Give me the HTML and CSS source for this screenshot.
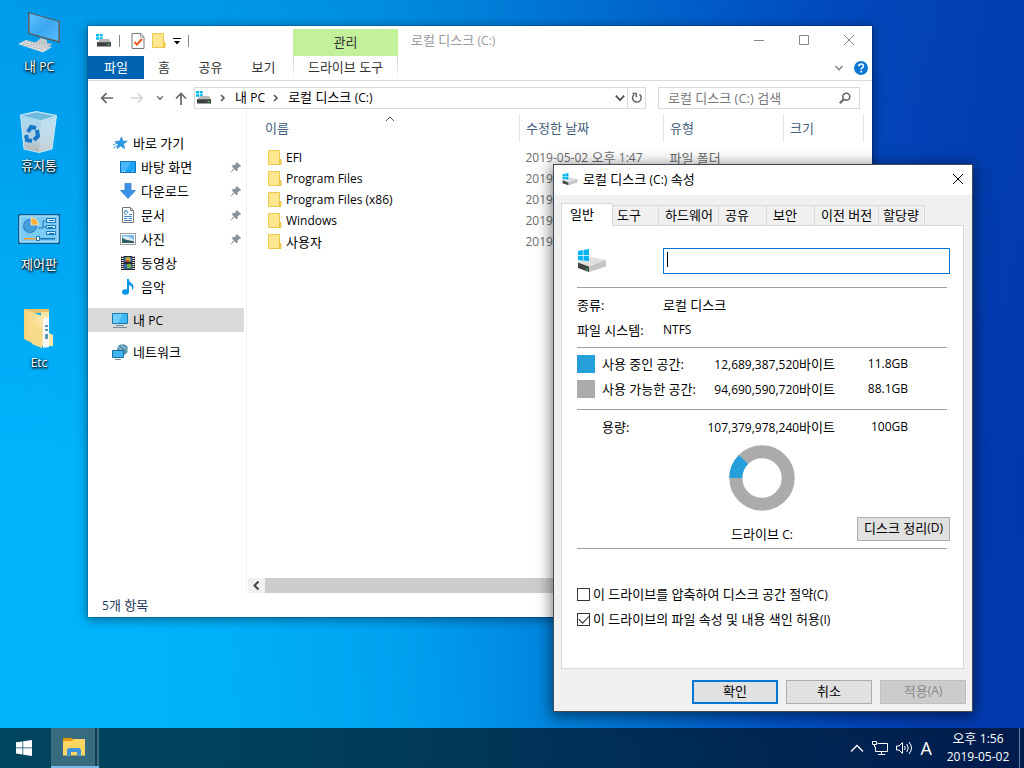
FILE: index.html
```html
<!DOCTYPE html>
<html lang="ko">
<head>
<meta charset="utf-8">
<meta name="viewport" content="width=device-width, initial-scale=1">
<title>로컬 디스크 (C:) 속성</title>
<link rel="stylesheet" href="styles.css">
</head>
<body>
<svg class="defs" aria-hidden="true">
  <defs>
    <linearGradient id="g-screen" x1="0" y1="0" x2="1" y2="1"><stop offset="0" stop-color="#5cc3fb"/><stop offset=".5" stop-color="#3ba7f2"/><stop offset="1" stop-color="#57baf8"/></linearGradient>
    <linearGradient id="g-folder" x1="0" y1="0" x2="1" y2="0"><stop offset="0" stop-color="#f3d37b"/><stop offset="1" stop-color="#fbe8a8"/></linearGradient>
    <linearGradient id="g-bin" x1="0" y1="0" x2="0" y2="1"><stop offset="0" stop-color="#a5dbf5"/><stop offset=".7" stop-color="#b5cfdd"/><stop offset="1" stop-color="#b8b4b4"/></linearGradient>
    <symbol id="drive" viewBox="0 0 16 14">
      <path fill="#00bcf2" d="M0 0h3v2.5H0zM3.7 0h3v2.5h-3zM0 3.2h3v2.5H0zM3.7 3.2h3v2.5h-3z"/>
      <path fill="#b9b9b9" d="M4 5h9l2 3H2z"/><path fill="#3e4143" d="M1 8h14v4.5H1z"/><path fill="#5c6063" d="M1 8h14v1H1z"/>
      <path fill="#4be04b" d="M11.5 10h2v1.2h-2z"/>
    </symbol>
    <symbol id="drive-large" viewBox="0 0 30 24">
      <path fill="#e1e1e1" d="m1 13 13-5 15 3v1L11 17z"/>
      <path fill="#c5c5c5" d="m12 17.300 17-6.300v6.500L12 23z"/>
      <path fill="#414345" d="m1 13.500 11 4V23L1 19z"/><path fill="#28c13d" d="m9 19.300 2 .7v1.500l-2-.7z"/>
      <path fill="#00b4f1" d="M1 2.100 5.800 1v5H1zM6.500.900 12 0v6H6.500zM1 6.700h4.800v4.900L1 11.200zM6.500 6.700H12v5.500l-5.500-.7z"/>
    </symbol>
    <symbol id="folder" viewBox="0 0 14 17"><path fill="#ffe690" stroke="#ecc94c" d="M.5 1.500h11v14H.5z"/><path fill="#fbd968" stroke="#e8c23e" d="M11.500 10.500h1.500v5h-1.500z"/></symbol>
    <symbol id="chevron-down" viewBox="0 0 10 10"><path d="m1.500 3 3.500 3.800L8.500 3" fill="none" stroke="currentColor" stroke-width="1.500"/></symbol>
    <symbol id="chevron-right" viewBox="0 0 10 10"><path d="m3 2 3 3-3 3" fill="none" stroke="currentColor" stroke-width="1.600"/></symbol>
    <symbol id="pin" viewBox="0 0 12 12"><path fill="#89929a" d="m7 1 4.200 4.200-1 .6-.7-.1-2 2 .1 1.900-.9.8L4.500 8.300 1 11.500.6 11l3.200-3.600L1.500 5l.9-.8 1.900.1 2-2L6.300 1.500z"/></symbol>
    <symbol id="close" viewBox="0 0 12 12"><path d="m1 1 10 10M11 1 1 11" fill="none" stroke="currentColor"/></symbol>
  </defs>
</svg>

<main class="desktop">
  <nav class="shortcuts" aria-label="바탕 화면">
    <a class="shortcut" href="#">
      <svg width="44" height="42" viewBox="0 0 44 42"><path fill="#565d62" d="m11 0 32 9v22l-32-9z"/><path fill="url(#g-screen)" d="m12.500 1.500 29 8.200V29l-29-8z"/><path fill="#bfc5c9" d="m24 26 6 2v3l6 1-5 2.500-14-3 4-3z"/><path fill="#d9dcde" d="m1 32 8-4 26 7-9 5.500z"/><path fill="none" stroke="#9aa0a5" stroke-width=".7" stroke-dasharray="2 1" d="m5 32 23 6M7 30.500l24 6M10 29.200l22 6"/></svg>
      <span>내 <span class="latin">PC</span></span>
    </a>
    <a class="shortcut" href="#">
      <svg width="40" height="42" viewBox="0 0 40 42"><path fill="url(#g-bin)" stroke="#c9eafa" d="m1.500 4 16-3.500 20 4L33 38l-13 3.500L5 38z"/><path fill="#6fb9df" d="m3 4.500 15-3 17.500 3.500L22 9z"/><path fill="#d5e7f0" opacity=".45" d="m22 9 15-4-4.500 33L20 41z"/><g fill="none" stroke="#1677c9" stroke-width="4"><path d="m9 21 3-5 5 1"/><path d="m7 24 1 5 5 1"/><path d="m18 19 1 6-4 4"/></g></svg>
      <span>휴지통</span>
    </a>
    <a class="shortcut" href="#">
      <svg width="42" height="42" viewBox="0 2 42 42"><path fill="#7bcbf5" stroke="#145c90" stroke-width="1.500" d="M.8 6.800h40.400v28.400H.8z"/><path fill="none" stroke="#b9e7fc" d="M2 8h38v26H2z"/><circle cx="12" cy="18" r="7" fill="#2181cc"/><circle cx="12" cy="18" r="6" fill="#479fda"/><path fill="#ffb13a" stroke="#fff" stroke-width=".6" d="M13 17v-7.500a7.500 7.500 0 0 1 7.500 7.500z"/><path fill="none" stroke="#1575b9" d="M20 20h5v-7h3M25 19h3"/><path fill="#c9ecff" stroke="#1575b9" d="M28.500 10.500h9v4h-9zM28.500 17.500h9v3h-9zM28.500 23.500h9v3h-9z"/><path fill="#1575b9" d="M31 12h5v1h-5zM30 19h5v1h-5zM31 25h5v1h-5z"/><path fill="#f49b28" d="M6 30h12v1.500H6z"/><path fill="#1575b9" d="M20 30h17v1.500H20z"/><path fill="#fff" stroke="#1575b9" d="M18.500 28.500h3v4h-3z"/></svg>
      <span>제어판</span>
    </a>
    <a class="shortcut" href="#">
      <svg width="32" height="42" viewBox="0 1 32 42"><path fill="#e7c266" d="M1 1h25v4H1z"/><path fill="#fbe7a6" d="M26 4v21l4 2v11H18V4z"/><path fill="#f7f8fa" d="m20 10 6-1v30l-6 1z"/><path fill="#5c99b8" d="M22 17h3v2h-3zM22 21h3v2h-3zM22 26h3v5h-3z"/><path fill="url(#g-folder)" d="m1 1 18 7v32L1 31z"/><path fill="#f8dc8c" d="m10 15 9 5v20l-10-4z"/></svg>
      <span class="latin">Etc</span>
    </a>
  </nav>

  <section class="window explorer" aria-label="로컬 디스크 (C:)">
    <header class="titlebar">
      <div class="quick">
        <svg width="16" height="14"><use href="#drive"/></svg><i class="sep"></i>
        <svg width="14" height="16" viewBox="0 0 14 16"><path fill="#fff" stroke="#777" d="M1 .5h9L13 4v11.500H1z"/><path fill="none" stroke="#999" d="M9.500.5V4H13"/><path fill="none" stroke="#e8591c" stroke-width="2" d="m3.500 9 2.500 2.500L11 6"/></svg>
        <svg width="14" height="17"><use href="#folder"/></svg>
        <svg width="8" height="8" viewBox="0 0 8 8"><path d="M0 1h8v1H0zM1 4h6L4 7.500z"/></svg><i class="sep"></i>
      </div>
      <div class="context">관리</div>
      <h1 class="caption">로컬 디스크 <span class="latin">(C:)</span></h1>
      <div class="controls">
        <button aria-label="최소화"><svg width="12" height="12"><path d="M1 6.500h10" stroke="currentColor"/></svg></button>
        <button aria-label="최대화"><svg width="12" height="12"><path d="M1.500 1.500h9v9h-9z" fill="none" stroke="currentColor"/></svg></button>
        <button aria-label="닫기"><svg width="12" height="12"><use href="#close"/></svg></button>
      </div>
    </header>
    <nav class="ribbon">
      <button class="file">파일</button><button class="home">홈</button><button>공유</button><button>보기</button><button class="tools">드라이브 도구</button>
      <span class="ribbon-end"><svg width="10" height="10"><use href="#chevron-down"/></svg>
      <svg width="14" height="14"><circle cx="7" cy="7" r="7" fill="#0d78d3"/><path d="M4.800 5.300c0-3 4.600-3 4.600-.3 0 1.600-2.200 1.500-2.200 3.400M7.200 9.800v1.800" fill="none" stroke="#fff" stroke-width="1.600"/></svg></span>
    </nav>
    <div class="address">
      <button class="nav" aria-label="뒤로"><svg width="14" height="12"><path d="M13 6H2M6.500 1.200 1.700 6l4.800 4.800" fill="none" stroke="#666" stroke-width="1.700"/></svg></button>
      <button class="nav" aria-label="앞으로"><svg width="14" height="12"><path d="M1 6h11M7.500 1.200 12.300 6l-4.800 4.800" fill="none" stroke="#d4d4d4" stroke-width="1.500"/></svg></button>
      <button class="recent" aria-label="최근 위치"><svg width="8" height="8"><use href="#chevron-down"/></svg></button>
      <button class="up" aria-label="위로"><svg width="12" height="13"><path d="M6 13V2M1 6.500l5-5 5 5" fill="none" stroke="#666" stroke-width="1.700"/></svg></button>
      <div class="path">
        <svg width="16" height="14"><use href="#drive"/></svg>
        <svg class="crumb" width="10" height="10"><use href="#chevron-right"/></svg><span>내 <span class="latin">PC</span></span>
        <svg class="crumb" width="10" height="10"><use href="#chevron-right"/></svg><span>로컬 디스크 <span class="latin">(C:)</span></span>
        <button class="drop" aria-label="이전 위치"><svg width="12" height="12"><use href="#chevron-down"/></svg></button>
        <button class="refresh" aria-label="새로 고침"><svg width="12" height="12" viewBox="0 0 12 12"><path d="M3 2.600a4.300 4.300 0 1 0 5.500-.2" fill="none" stroke="#666" stroke-width="1.500"/><path fill="#666" d="M1.500.8H6v4.500H4.600V2.200H1.500z"/></svg></button>
      </div>
      <label class="search"><input type="text" placeholder="로컬 디스크 (C:) 검색" aria-label="검색"><svg width="12" height="12"><circle cx="7.300" cy="4.700" r="3.500" fill="none" stroke="#666" stroke-width="1.600"/><path d="M4.800 7.200.8 11.200" stroke="#666" stroke-width="2"/></svg></label>
    </div>
    <div class="body">
      <nav class="tree">
        <a class="root" href="#"><svg width="16" height="16"><path fill="#2c9be8" stroke="#1b7dca" stroke-width=".7" d="m9.500 2 1.200 4.300h4.500l-3.800 2.500 1.300 4.700-4-2.600L5 13.500l1.200-4.300L3 6.500l4.500-.2z"/><path d="m1 10 4-2M1.500 13 5 10.500" stroke="#3ba0e5"/></svg>바로 가기</a>
        <a href="#"><svg width="16" height="16"><path fill="#1ba2f4" stroke="#0d72b8" d="M.5 2.500h15v11H.5z"/><path fill="#45b7fa" d="M1 3h10L6 12H1z"/><path stroke="#fff" stroke-dasharray="1 1" d="M2 12.500h3M12 12.500h2"/></svg>바탕 화면<svg class="pin" width="12" height="12"><use href="#pin"/></svg></a>
        <a href="#"><svg width="16" height="16"><path fill="#3b91e5" stroke="#2576c8" stroke-width=".7" d="M5 .5h6v7h4.500L8 15.500.5 7.500H5z"/></svg>다운로드<svg class="pin" width="12" height="12"><use href="#pin"/></svg></a>
        <a href="#"><svg width="16" height="16"><path fill="#fff" stroke="#777" d="M2.500.5h8l3 3v12h-11z"/><path fill="none" stroke="#777" d="M10.500.5v3h3"/><path stroke="#3c8ac5" d="M4 7h3M9 7.500h3M4 9.500h8M4 11.500h3M9 11.500h3M4 13.500h8"/><path fill="none" stroke="#1e79b9" d="m4 6 2-3 2 3"/></svg>문서<svg class="pin" width="12" height="12"><use href="#pin"/></svg></a>
        <a href="#"><svg width="16" height="16"><path fill="#fff" stroke="#999" d="M.5 2.500h15v11H.5z"/><path fill="#79bdec" d="M2 4h12v5H2z"/><path fill="#dcefff" d="m4 5 5 1 5 3H2z"/><path fill="#315b63" d="m2 7 5 2 7 1v2H2z"/></svg>사진<svg class="pin" width="12" height="12"><use href="#pin"/></svg></a>
        <a href="#"><svg width="16" height="16"><path fill="#292929" d="M1 1h14v14H1z"/><path stroke="#fff" stroke-width="2" stroke-dasharray="1 1" d="M2.500 1v14M13.500 1v14"/><path fill="#3367aa" d="M4 2h8v5H4zM4 9h8v5H4z"/><circle cx="8" cy="4.500" r="2.500" fill="#cbb22f"/><circle cx="9" cy="11" r="2.300" fill="#7bae39"/><path fill="#d44536" d="M6 5h3v2H6z"/></svg>동영상</a>
        <a href="#"><svg width="16" height="16"><ellipse cx="5.500" cy="13" rx="3.500" ry="2.800" fill="#0795e9"/><path fill="#0795e9" d="M7 0h1.800c0 4 4.800 4 4.800 8 0 1.300-.6 2.500-1.600 3.500 1-4-1.500-5-3-5.200V13H7z"/></svg>음악</a>
        <a class="root place selected" href="#"><svg width="16" height="16"><path fill="#42b7f2" stroke="#197bad" d="M.5 1.500h15v10H.5z"/><path fill="#6fcefa" d="M1 2h10L6 11H1z"/><path fill="#778a96" d="M4 13h8v1H4zM1 15h14v1H1z"/></svg><span>내 <span class="latin">PC</span></span></a>
        <a class="root place" href="#"><svg width="16" height="16"><circle cx="10.500" cy="5.500" r="5.500" fill="#5794ab"/><path d="M5.500 4c3-1 4 2 5 4m0-8c-4 3 6 4 5 7" stroke="#c0e0ea" fill="none"/><path fill="#41b4f2" stroke="#196d9f" d="M.5 6.500h11v7H.5z"/><path fill="#7b8c96" d="M3 15h6v1H3z"/></svg>네트워크</a>
      </nav>
      <div class="files">
        <table>
          <colgroup><col><col class="col-date"><col class="col-type"><col class="col-size"></colgroup>
          <thead><tr><th class="name">이름<svg class="sort" width="10" height="10"><path d="m1 7 4-4 4 4" fill="none" stroke="#555"/></svg></th><th>수정한 날짜</th><th>유형</th><th>크기</th></tr></thead>
          <tbody>
            <tr><td class="entry latin"><svg width="14" height="17"><use href="#folder"/></svg>EFI</td><td><span class="latin">2019-05-02</span> 오후 <span class="latin">1:47</span></td><td>파일 폴더</td><td></td></tr>
            <tr><td class="entry latin"><svg width="14" height="17"><use href="#folder"/></svg>Program Files</td><td class="latin">2019</td><td></td><td></td></tr>
            <tr><td class="entry latin"><svg width="14" height="17"><use href="#folder"/></svg>Program Files (x86)</td><td class="latin">2019</td><td></td><td></td></tr>
            <tr><td class="entry latin"><svg width="14" height="17"><use href="#folder"/></svg>Windows</td><td class="latin">2019</td><td></td><td></td></tr>
            <tr><td class="entry"><svg width="14" height="17"><use href="#folder"/></svg>사용자</td><td class="latin">2019</td><td></td><td></td></tr>
          </tbody>
        </table>
        <div class="scrollbar"><svg width="17" height="15"><path d="M10.500 3.500 6.500 7.500l4 4" fill="none" stroke="#444" stroke-width="2"/></svg><span class="thumb"></span></div>
      </div>
    </div>
    <footer class="status"><span class="latin">5</span>개 항목</footer>
  </section>

  <section class="window dialog" role="dialog" aria-label="로컬 디스크 (C:) 속성">
    <header class="dialog-title"><svg width="16" height="13"><use href="#drive-large"/></svg><h2>로컬 디스크 <span class="latin">(C:)</span> 속성</h2><button aria-label="닫기"><svg width="12" height="12"><use href="#close"/></svg></button></header>
    <div class="tabs" role="tablist">
      <button class="tab active" role="tab" aria-selected="true">일반</button><button class="tab short" role="tab">도구</button><button class="tab wide" role="tab">하드웨어</button><button class="tab" role="tab">공유</button><button class="tab" role="tab">보안</button><button class="tab widest" role="tab">이전 버전</button><button class="tab short" role="tab">할당량</button>
    </div>
    <div class="panel">
      <div class="volume"><svg width="30" height="26"><use href="#drive-large"/></svg><div class="volume-field"><input type="text" aria-label="볼륨 이름"><i class="caret"></i></div></div>
      <hr>
      <dl class="facts"><dt>종류:</dt><dd>로컬 디스크</dd><dt>파일 시스템:</dt><dd class="latin">NTFS</dd></dl>
      <hr>
      <div class="usage">
        <div class="usage-row"><i class="swatch used"></i><span>사용 중인 공간:</span><span class="amount"><span class="latin">12,689,387,520</span>바이트</span><span class="amount latin">11.8GB</span></div>
        <div class="usage-row"><i class="swatch free"></i><span>사용 가능한 공간:</span><span class="amount"><span class="latin">94,690,590,720</span>바이트</span><span class="amount latin">88.1GB</span></div>
      </div>
      <hr>
      <div class="total usage-row"><i></i><span>용량:</span><span class="amount"><span class="latin">107,379,978,240</span>바이트</span><span class="amount latin">100GB</span></div>
      <div class="chart">
        <figure><svg width="66" height="66" viewBox="0 0 66 66"><circle cx="33" cy="33" r="26.200" fill="none" stroke="#ababab" stroke-width="13"/><path d="M6.800 33A26.200 26.200 0 0 1 14.500 14.500" fill="none" stroke="#26a0da" stroke-width="13"/></svg><figcaption>드라이브 <span class="latin">C:</span></figcaption></figure>
        <button class="button cleanup">디스크 정리<span class="latin">(D)</span></button>
      </div>
      <hr>
      <div class="options">
        <label><input type="checkbox"><span>이 드라이브를 압축하여 디스크 공간 절약<span class="latin">(C)</span></span></label>
        <label><input type="checkbox" checked><span>이 드라이브의 파일 속성 및 내용 색인 허용<span class="latin">(I)</span></span></label>
      </div>
    </div>
    <footer class="actions"><button class="button primary">확인</button><button class="button">취소</button><button class="button" disabled>적용<span class="latin">(A)</span></button></footer>
  </section>
</main>

<footer class="taskbar">
  <button class="start" aria-label="시작"><svg width="16" height="16"><path fill="#fff" d="M0 2.300 6.500 1.400v6.100H0zM7.200 1.300 16 0v7.500H7.200zM0 8.300h6.500v6.100L0 13.600zM7.200 8.300H16V16l-8.800-1.300z"/></svg></button>
  <button class="task" aria-label="파일 탐색기"><svg width="22" height="18"><path fill="#e39a10" d="M0 0h9l1.500 1.500V4H0z"/><path fill="#fbd663" d="M0 3h9l1.500-2H22v16.500H0z"/><path fill="#3e94dc" d="M4 17.500v-6L6 10h10l2 1.500v6h-4V14H8v3.500z"/></svg></button>
  <div class="tray">
    <svg width="14" height="10"><path d="m1 8.500 6-6 6 6" fill="none" stroke="#fff" stroke-width="1.300"/></svg>
    <svg width="16" height="16"><path fill="none" stroke="#fff" d="M5.500 3.500h10v8h-12V7M9.500 11.500v3M6 14.500h7M.5 1.500h4v3h-4zM2.500 4.500V7h1"/></svg>
    <svg width="17" height="16"><path fill="none" stroke="#fff" d="M.5 6v4h2.500l3.500 3.500v-11L3 6zM8.500 6q1.500 2 0 4M10.800 4q3 4 0 8M13 2q5 6 0 12"/></svg>
    <span class="ime">A</span>
    <time class="clock" datetime="2019-05-02T13:56"><span>오후 <span class="latin">1:56</span></span><span class="latin">2019-05-02</span></time>
    <i class="peek"></i>
  </div>
</footer>
</body>
</html>
```
FILE: styles.css
```css
* { box-sizing: border-box; }
body {
  margin: 0;
  min-height: 100vh;
  display: flex;
  flex-direction: column;
  overflow: hidden;
  font: 13px/18px "Open Sans", "Noto Sans CJK KR", sans-serif;
  color: #000;
  background: linear-gradient(180deg, #0054b844, #0054b800 60%), linear-gradient(88deg, #00b4fc 0%, #00b2fa 20%, #00a2f0 38%, #007edb 56%, #0054c8 74%, #0340b8 86%, #0237ac 100%);
}
button, input { font: inherit; color: inherit; }
button { padding: 0; border: 0; background: none; display: inline-flex; align-items: center; justify-content: center; white-space: nowrap; }
a { color: inherit; text-decoration: none; }
svg { flex: none; display: block; }
h1, h2, dl, dd, figure { margin: 0; font-size: 13px; font-weight: 400; }
.defs { position: absolute; width: 0; height: 0; }
.latin { font-size: 12px; }

.desktop { flex: 1; position: relative; }
.shortcuts { display: flex; flex-direction: column; gap: 36px; width: 78px; padding-top: 12px; }
.shortcut { display: flex; flex-direction: column; align-items: center; gap: 3px; color: #fff; text-shadow: 1px 1px 2px #000, 0 1px 3px #000; }
.shortcut > span { height: 18px; line-height: 18px; }

.window { position: absolute; background: #fff; display: flex; flex-direction: column; }
.explorer { left: 88px; right: 152px; top: 26px; bottom: 111px; box-shadow: 0 2px 10px 1px #00000066, 0 0 1px #003; }
.titlebar { display: flex; height: 30px; align-items: center; color: #999; }
.quick { width: 205px; display: flex; align-items: center; gap: 7px; padding: 0 0 1px 8px; }
.sep { width: 1px; height: 12px; background: #888; margin-right: 4px; }
.context { align-self: flex-end; width: 105px; height: 27px; padding-bottom: 2px; display: grid; place-items: center; background: #c2f09b; color: #333; }
.caption { padding: 0 0 2px 13px; flex: 1; }
.controls { display: flex; color: #888; padding-right: 1px; }
.controls button { width: 45px; height: 30px; padding-bottom: 2px; }
.ribbon { display: flex; height: 25px; border-bottom: 1px solid #dadbdc; color: #333; }
.ribbon button { width: 53px; height: 23px; padding-bottom: 2px; }
.ribbon .file { width: 56px; background: #0063b1; color: #fff; }
.ribbon .home { width: 40px; }
.ribbon .tools { width: 105px; margin-left: 3px; border: solid; border-width: 0 1px; border-image: linear-gradient(#ccc, #fff) 1; }
.ribbon-end { margin-left: auto; padding-right: 4px; display: flex; align-items: center; gap: 10px; color: #888; }
.address { display: flex; align-items: center; padding: 6px 12px 0 4px; height: 28px; flex: none; }
.nav { width: 30px; }
.recent { width: 16px; color: #555; }
.up { width: 26px; }
.path { flex: 1; display: flex; align-items: center; height: 22px; padding: 0 0 1px 1px; border: 1px solid #d9d9d9; }
.crumb { margin: 0 7px 0 6px; color: #555; }
.drop { margin-left: auto; width: 15px; color: #555; }
.refresh { width: 18px; height: 20px; border-left: 1px solid #d9d9d9; }
.search { width: 202px; height: 22px; margin-left: 12px; padding: 0 8px 1px 9px; display: flex; align-items: center; border: 1px solid #d9d9d9; }
.search input { min-width: 0; flex: 1; padding: 0; border: 0; outline: 0; }
.search input::placeholder { color: #777; opacity: 1; }
.body { flex: 1; display: flex; min-height: 0; }
.tree { width: 159px; padding: 22px 2px 0 0; border-right: 1px solid #f0f0f0; flex: none; }
.tree a { display: flex; align-items: center; height: 24px; padding: 0 2px 0 32px; gap: 5px; }
.tree .root { padding-left: 24px; }
.tree .place { margin-top: 8px; }
.tree .selected { margin-top: 9px; background: #d9d9d9; }
.pin { margin-left: auto; }
.files { flex: 1; display: flex; flex-direction: column; justify-content: space-between; min-width: 0; }
.files table { width: calc(100% - 8px); table-layout: fixed; border-collapse: collapse; margin-top: 5px; color: #6d6d6d; }
.col-date { width: 144px; }
.col-type { width: 120px; }
.col-size { width: 80px; }
.files th { height: 28px; padding: 0 6px; font-weight: 400; text-align: left; color: #44607d; border-right: 1px solid #e5e5e5; }
.files .name { position: relative; padding-left: 18px; }
.sort { position: absolute; top: 0; left: calc(50% + 2px); }
.files td { padding: 0 6px; height: 21px; white-space: nowrap; }
.files tbody::before { content: ""; display: block; height: 5px; }
.files .entry { display: flex; align-items: center; gap: 4px; padding-left: 21px; color: #000; }
.scrollbar { display: flex; height: 15px; margin-left: 1px; background: #f0f0f0; }
.thumb { width: 75%; background: #cdcdcd; }
.status { padding: 3px 14px 3px; height: 24px; color: #1e395b; }

.dialog { right: 51px; top: 164px; width: 420px; background: #f0f0f0; border: 1px solid #434a55; box-shadow: 0 3px 14px 2px #00000080; }
.dialog-title { display: flex; align-items: center; height: 30px; padding: 0 8px 2px; gap: 5px; background: #fff; }
.dialog-title h2 { flex: 1; }
.tabs { display: flex; align-items: flex-end; height: 30px; padding: 0 7px; }
.tab { height: 20px; width: 48px; padding: 0 6px 1px; justify-content: flex-start; border: 1px solid #d9d9d9; border-width: 1px 1px 0 0; }
.tab.wide { width: 60px; }
.tab.widest { width: 64px; }
.tab.short { width: 46px; padding: 0 4px 1px; }
.tab.active { width: 52px; height: 23px; margin-bottom: -1px; padding: 0 8px 3px; border-left-width: 1px; background: #fff; z-index: 1; }
.panel { margin: 0 8px 0 7px; padding: 22px 13px 40px 15px; background: #fff; border: 1px solid #d9d9d9; }
.panel hr { border: 0; height: 1px; margin: 0 3px 0 0; background: #a0a0a0; }
.volume { display: flex; align-items: center; height: 39px; padding-bottom: 13px; }
.volume-field { position: relative; flex: 1; margin-left: 56px; }
.volume input { display: block; width: 100%; height: 26px; border: 1px solid #0078d7; outline: 0; }
.caret { position: absolute; left: 4px; top: 4px; width: 1px; height: 15px; background: #000; }
.facts { display: grid; grid-template-columns: 86px 1fr; grid-auto-rows: 18px; row-gap: 7px; padding: 8px 0; }
.usage { display: grid; gap: 7px; padding: 7px 0 11px; }
.usage-row { display: grid; grid-template: 18px / 25px 100px 133px 73px; align-items: center; white-space: nowrap; }
.usage-row > span { height: 18px; }
.amount { text-align: right; }
.swatch { width: 18px; height: 18px; }
.used { background: #26a0da; }
.free { background: #ababab; }
.total { padding: 8px 0 9px; }
.chart { position: relative; display: flex; justify-content: center; padding: 0 3px 5px 0; }
figure { display: grid; grid-template-rows: 66px 18px; justify-items: center; gap: 14px; }
.cleanup { position: absolute; right: 0; bottom: 7px; }
.button { width: 86px; height: 24px; padding-bottom: 2px; border: 1px solid #adadad; background: #e1e1e1; }
.button.cleanup { width: 93px; }
.button.primary { border: 2px solid #0078d7; }
.button:disabled { background: #ccc; border-color: #bfbfbf; color: #888; }
.options { display: grid; grid-auto-rows: 18px; gap: 7px; padding-top: 36px; }
.options label { display: flex; align-items: center; white-space: nowrap; }
.options span { height: 18px; line-height: 18px; }
.options input { appearance: none; width: 13px; height: 13px; margin: 0 3px 0 0; border: 1px solid #333; display: grid; place-items: center; }
.options input:checked::before { content: ""; width: 9px; height: 5px; border: solid #222; border-width: 0 0 1px 1px; transform: translateY(-1px) rotate(-45deg); }
.actions { display: flex; justify-content: flex-end; gap: 8px; padding: 11px 6px 7px; }

.taskbar { height: 40px; display: flex; justify-content: space-between; color: #fff; background: linear-gradient(90deg, #00455f, #003f5b 30%, #002c55 65%, #001b4c); }
.start { width: 51px; padding-right: 3px; }
.task { width: 48px; padding-right: 2px; margin-right: auto; border-bottom: 2px solid #76b9ed; background: linear-gradient(90deg, #376b80 44px, #183f50 44px, #183f50 46px, #376b80 46px); }
.tray { display: flex; align-items: center; gap: 8px; }
.ime { font: 18px/20px "Open Sans", sans-serif; }
.clock { display: flex; flex-direction: column; align-items: center; margin-left: 4px; padding-bottom: 1px; width: 68px; }
.peek { align-self: stretch; width: 5px; margin-left: -1px; border-left: 1px solid #647da3; }
```
